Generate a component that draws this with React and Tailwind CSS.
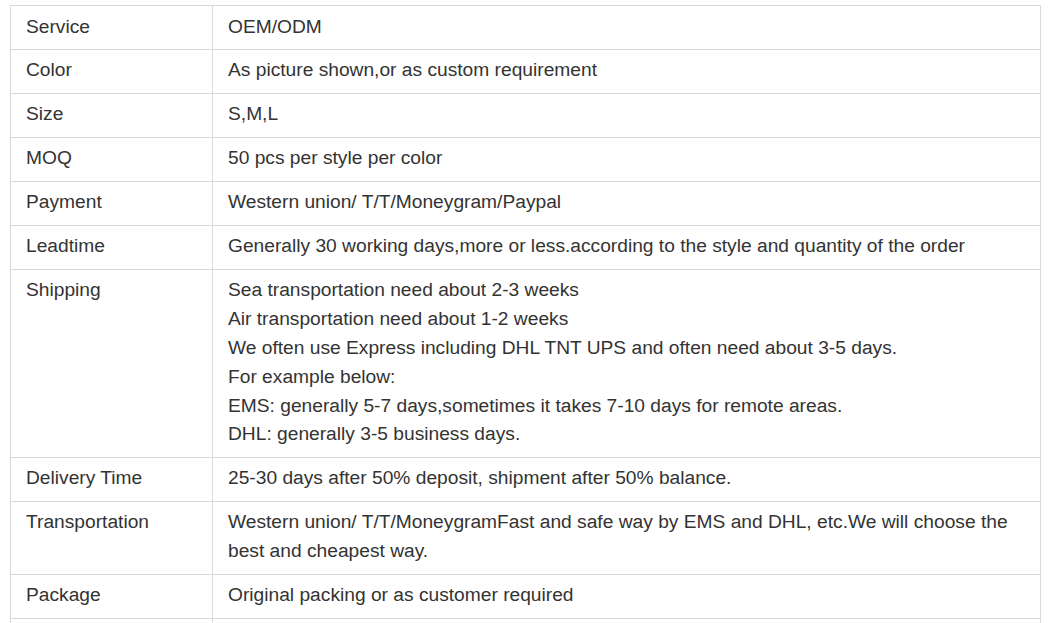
const rows = [
  ["Service", ["OEM/ODM"]],
  ["Color", ["As picture shown,or as custom requirement"]],
  ["Size", ["S,M,L"]],
  ["MOQ", ["50 pcs per style per color"]],
  ["Payment", ["Western union/ T/T/Moneygram/Paypal"]],
  [
    "Leadtime",
    ["Generally 30 working days,more or less.according to the style and quantity of the order"],
  ],
  [
    "Shipping",
    [
      "Sea transportation need about 2-3 weeks",
      "Air transportation need about 1-2 weeks",
      "We often use Express including DHL TNT UPS and often need about 3-5 days.",
      "For example below:",
      "EMS: generally 5-7 days,sometimes it takes 7-10 days for remote areas.",
      "DHL: generally 3-5 business days.",
    ],
  ],
  ["Delivery Time", ["25-30 days after 50% deposit, shipment after 50% balance."]],
  [
    "Transportation",
    [
      "Western union/ T/T/MoneygramFast and safe way by EMS and DHL, etc.We will choose the best and cheapest way.",
    ],
  ],
  ["Package", ["Original packing or as customer required"]],
];

const App = () => {
  return (
    <div className="h-[623px] overflow-hidden bg-white pt-[5px] pl-[10px] font-['Liberation_Sans',Arial,sans-serif] text-[19.2px] leading-[1.5] text-[#333333]">
      <table className="w-[1031px] border-collapse table-fixed">
        <colgroup>
          <col className="w-[202px]" />
          <col />
        </colgroup>
        <tbody>
          {rows.map(([label, lines]) => (
            <tr key={label}>
              <td className="border border-[#d9d9d9] px-[15px] pt-[6.5px] pb-[7.7px] align-top">{label}</td>
              <td className="border border-[#d9d9d9] px-[15px] pt-[6.5px] pb-[7.7px] align-top">
                {lines.map((line) => (
                  <div key={line}>{line}</div>
                ))}
              </td>
            </tr>
          ))}
          <tr>
            <td className="h-[44px] border border-[#d9d9d9]"></td>
            <td className="h-[44px] border border-[#d9d9d9]"></td>
          </tr>
        </tbody>
      </table>
    </div>
  );
};

export default App;
